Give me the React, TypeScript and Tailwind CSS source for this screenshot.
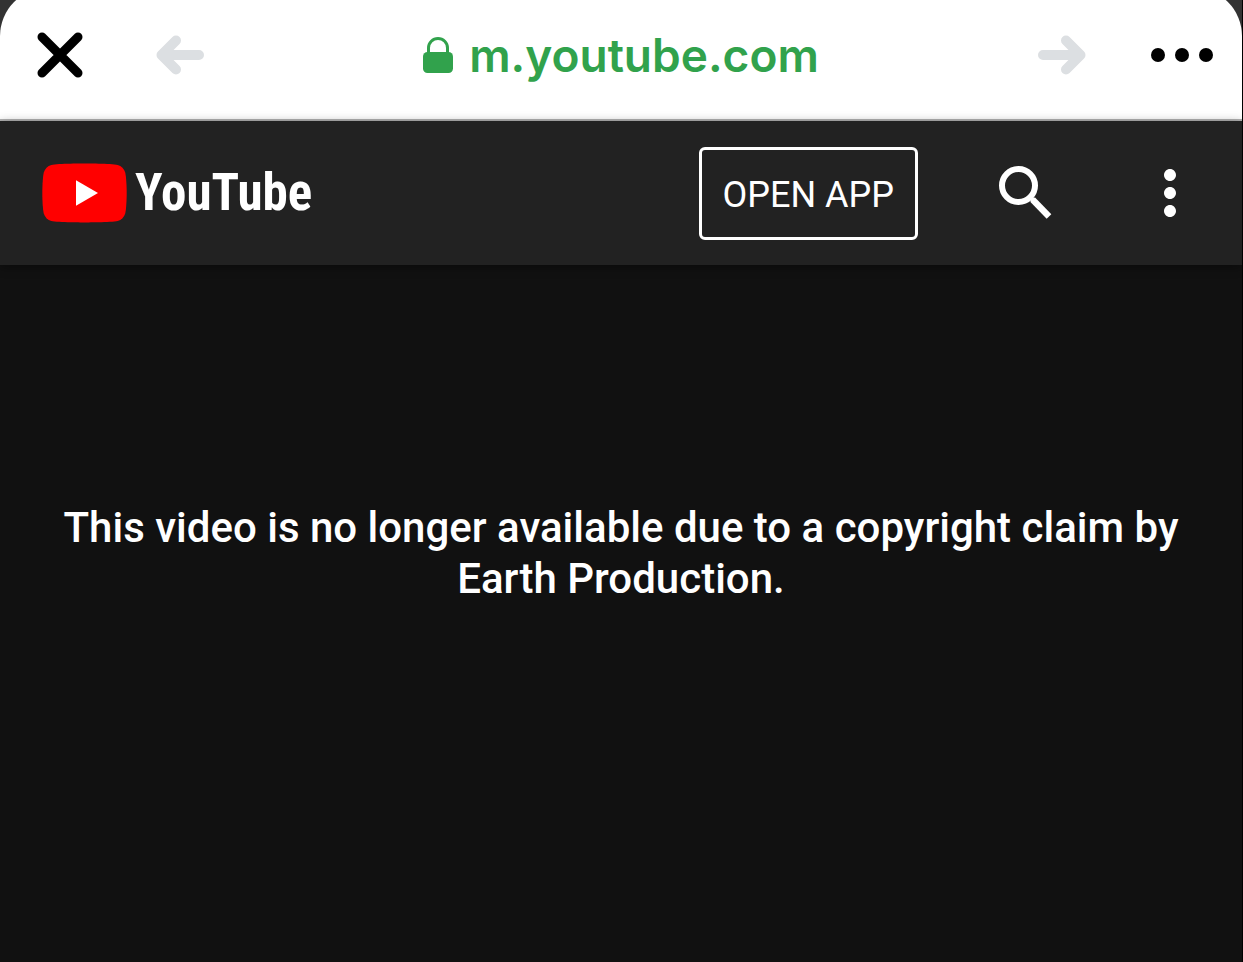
import { MdMoreVert } from 'react-icons/md'

function YouTubeLogo() {
  return (
    <a href="#" aria-label="YouTube home" className="flex items-center gap-2 text-white">
      <svg viewBox="0 0 85 60" className="h-[60px] w-[85px]" aria-hidden="true">
        <path
          d="M83.2 9.4C82.2 5.700 79.400 2.900 75.700 1.900 69.100.5 42.500.5 42.500.5S15.900.5 9.300 1.900C5.600 2.900 2.800 5.700 1.800 9.400.3 16 .3 30 .3 30s0 14 1.500 20.600c1 3.700 3.800 6.500 7.500 7.500 6.600 1.400 33.200 1.400 33.200 1.400s26.600 0 33.200-1.400c3.700-1 6.500-3.800 7.500-7.500C84.700 44 84.700 30 84.700 30s0-14-1.500-20.600z"
          fill="#f00"
        />
        <path d="M34 17.300 56 30 34 42.700z" fill="#fff" />
      </svg>
      <span className="font-['Roboto_Condensed','Roboto',sans-serif] text-[51px] leading-[60px] font-bold">
        YouTube
      </span>
    </a>
  )
}

function BrowserBar() {
  return (
    <div className="bg-[#333]">
      {/* Sheet corners run slightly past the top edge */}
      <div className="-mt-3 rounded-t-[48px] border-b-2 border-[#b4b4b4] bg-white pt-3 pb-2.5">
        <nav className="grid h-[109px] grid-cols-[1fr_auto_1fr] items-center px-7">
          <div className="flex items-center gap-[72px] pl-2">
            <button type="button" aria-label="Close">
              <svg viewBox="0 0 48 48" className="size-12" fill="none" stroke="#000" strokeWidth="9" strokeLinecap="round">
                <path d="M6 6l36 36M42 6L6 42" />
              </svg>
            </button>
            <button type="button" aria-label="Back" disabled>
              <svg viewBox="0 0 48 40" className="h-10 w-12" fill="none" stroke="#dcdfe2" strokeWidth="10" strokeLinecap="round" strokeLinejoin="round">
                <path d="M43 20H7M20 5.500L5.500 20 20 34.500" />
              </svg>
            </button>
          </div>

          <div className="flex items-center gap-4 text-[#31a24c]">
            <svg viewBox="0 0 30 36" className="h-9 w-[30px]" aria-hidden="true">
              <rect y="15" width="30" height="21" rx="4.500" fill="currentColor" />
              <path d="M5.500 17V11a9.500 9.500 0 0 1 19 0v6" fill="none" stroke="currentColor" strokeWidth="3" />
            </svg>
            <span className="font-['Inter',sans-serif] text-[46px] leading-12 font-semibold">m.youtube.com</span>
          </div>

          <div className="flex items-center justify-end gap-16">
            <button type="button" aria-label="Forward" disabled>
              <svg viewBox="0 0 48 40" className="h-10 w-12" fill="none" stroke="#dcdfe2" strokeWidth="10" strokeLinecap="round" strokeLinejoin="round">
                <path d="M5 20H41M28 5.500L42.500 20 28 34.500" />
              </svg>
            </button>
            <button type="button" aria-label="More options">
              <svg viewBox="0 0 64 16" className="h-4 w-16">
                <circle cx="8" cy="8" r="7" />
                <circle cx="32" cy="8" r="7" />
                <circle cx="56" cy="8" r="7" />
              </svg>
            </button>
          </div>
        </nav>
      </div>
    </div>
  )
}

function SiteHeader() {
  return (
    <header className="relative flex h-36 items-center justify-between bg-[#222] pr-9 pl-[42px] text-white shadow-[0_2px_10px_rgba(0,0,0,0.4)]">
      <YouTubeLogo />
      <div className="flex items-center gap-[72px]">
        <button
          type="button"
          className="rounded-md border-3 border-white px-[21px] pt-[22px] pb-[18px] font-['Roboto',sans-serif] text-4xl leading-[47px]"
        >
          OPEN APP
        </button>
        <button type="button" aria-label="Search">
          <svg viewBox="0 0 72 72" className="size-[72px]" fill="none" stroke="currentColor" strokeWidth="6">
            <circle cx="28.500" cy="28.500" r="16.500" />
            <path d="M42.500 42.500l16.500 17" strokeWidth="6.500" />
            <path d="M40 40l4 4" strokeWidth="4" />
          </svg>
        </button>
        <button type="button" aria-label="Menu">
          <MdMoreVert className="size-[72px]" />
        </button>
      </div>
    </header>
  )
}

export default function App() {
  return (
    <div className="flex min-h-screen flex-col overflow-hidden border-r border-black bg-[#111]">
      <BrowserBar />
      <SiteHeader />
      <main className="flex-1 px-12 pt-[237px] pb-12">
        <p className="text-center font-['Roboto',sans-serif] text-[42px] leading-[51px] font-medium text-white">
          This video is no longer available due to a copyright claim by Earth Production.
        </p>
      </main>
    </div>
  )
}
